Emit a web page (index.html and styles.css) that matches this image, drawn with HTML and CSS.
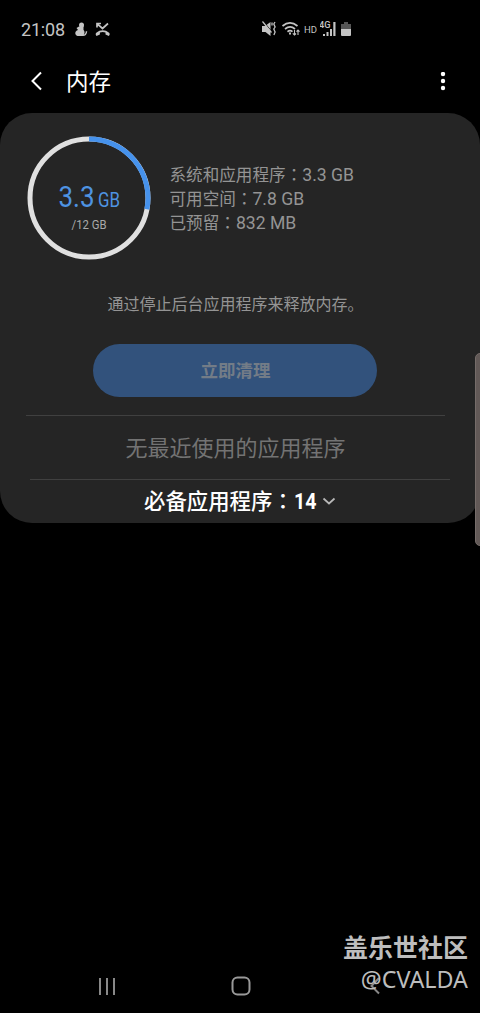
FILE: index.html
```html
<!DOCTYPE html>
<html lang="zh-CN">
<head>
<meta charset="utf-8">
<title>内存</title>
<link rel="stylesheet" href="styles.css">
</head>
<body>
<div class="screen">
  <header class="status">
    <span class="time">21:08</span>
    <svg class="status-left" width="38" height="18" viewBox="0 0 38 18" fill="#c4c4c4">
      <circle cx="7.500" cy="5" r="2.500"/><path d="M5 6.500 9.500 6v4c1.500 1 1.500 5-1 6H3.500C.5 15 .5 11 4 10L2.500 8z"/><path d="M8 15.300c3 .5 4.500-1.300 4.500-4" fill="none" stroke="#c4c4c4" stroke-width="1.400"/>
      <path d="M22.500 16c-1-1.400-1.100-2.400-.2-3.300 4-3.300 8.800-3.300 12.800 0 .9.900.8 1.900-.2 3.300l-3.400-1.600v-1.800c-1.900-.8-3.700-.8-5.600 0v1.800z"/>
      <path d="M23 7.500V3.500h4M23.300 3.800 28.500 8.500 34 3.500" fill="none" stroke="#c4c4c4" stroke-width="1.700"/>
    </svg>
    <svg class="status-sound" width="40" height="18" viewBox="0 0 40 18" fill="none" stroke="#c4c4c4" stroke-width="1.700">
      <path d="M1 6h3l5.500-4v14l-5-4H1z" fill="#c4c4c4" stroke="none"/><path d="m2.500 1.500 9 11" stroke="#000" stroke-width="1"/><path d="m1.500 1.500 9 11" stroke-width="1.200"/>
      <path d="M11 2.500v3M14 2l-1.200 2 1.300 3-1.300 2 1.300 3-1.200 3" stroke-width="1.300"/>
      <path d="M21.500 6c4.700-4 10.300-4 15 0M24 9c3.200-2.600 7-2.600 10 0M26.500 11.700c1.600-1.200 3.500-1.200 5 0"/>
      <path d="M29 12.500v2" stroke-width="2"/><path d="M33.500 10v5m-1.700-1.700 1.700 1.700 1.500-1.500M37 15V10m-1.500 1.600L37 10l1.500 1.600" stroke-width="1.100"/>
    </svg>
    <span class="hd">HD</span>
    <svg class="status-signal" width="33" height="18" viewBox="0 0 33 18" fill="#c4c4c4">
      <text x="-1" y="8" class="net" textLength="11.500" lengthAdjust="spacingAndGlyphs">4G</text>
      <path d="M3 14h2v2H3zM6.500 12h2v4h-2zM10 9h2v7h-2zM13.300 2h2.200v14h-2.200z"/>
      <path d="M24 2h4v2h3v5H21V4h3z" fill="#555"/><path d="M21 9h10v6q0 1-1 1h-8q-1 0-1-1z"/>
    </svg>
  </header>

  <nav class="toolbar">
    <svg class="back" width="14" height="22" viewBox="0 0 14 22"><path d="M11 1.500 2.500 10 11 18.500" fill="none" stroke="#fff" stroke-width="2"/></svg>
    <h1 class="title">内存</h1>
    <svg class="more" width="6" height="20" viewBox="0 0 6 20" fill="#fff"><circle cx="3" cy="2" r="2.200"/><circle cx="3" cy="9" r="2.200"/><circle cx="3" cy="16" r="2.200"/></svg>
  </nav>

  <main class="card">
    <section class="summary">
      <svg class="ring" width="124" height="124" viewBox="0 0 124 124">
        <circle cx="62" cy="62" r="59" fill="none" stroke="#e0e0e0" stroke-width="5"/>
        <path d="M62 3A59 59 0 0 1 119.900 73.300" fill="none" stroke="#4692ec" stroke-width="5"/>
        <text class="used" x="31.500" y="71" textLength="36" lengthAdjust="spacingAndGlyphs">3.3</text>
        <text class="unit" x="71" y="71" textLength="22" lengthAdjust="spacingAndGlyphs">GB</text>
        <text class="total" x="44.500" y="93" textLength="35" lengthAdjust="spacingAndGlyphs">/12 GB</text>
      </svg>
      <ul class="details">
        <li>系统和应用程序<span class="colon" lang="zh-TW">：</span><span class="value">3.3 GB</span></li>
        <li>可用空间<span class="colon" lang="zh-TW">：</span><span class="value">7.8 GB</span></li>
        <li>已预留<span class="colon" lang="zh-TW">：</span><span class="value">832 MB</span></li>
      </ul>
    </section>
    <p class="hint">通过停止后台应用程序来释放内存。</p>
    <button class="clean">立即清理</button>
    <div class="empty">无最近使用的应用程序</div>
    <div class="essential">
      <span>必备应用程序<span class="colon" lang="zh-TW">：</span></span><span class="count">14</span>
      <svg class="chevron" width="14" height="9" viewBox="0 0 14 9"><path d="m1.500 1.500 5.500 5 5.500-5" fill="none" stroke="#b8b8b8" stroke-width="1.700"/></svg>
    </div>
  </main>

  <div class="edge"></div>

  <footer class="navbar">
    <svg class="recents" width="18" height="18" viewBox="0 0 18 18" fill="#888"><path d="M1 1h2v17H1zM8 1h2v17H8zM15 1h2v17h-2z"/></svg>
    <svg class="home" width="20" height="20" viewBox="0 0 20 20"><rect x="1.500" y="1.500" width="17" height="17" rx="5" fill="none" stroke="#999" stroke-width="2"/></svg>
    <svg class="nav-back" width="12" height="18" viewBox="0 0 12 18"><path d="M9 1 1.500 9 9 16.500" fill="none" stroke="#888" stroke-width="2"/></svg>
  </footer>
  <div class="watermark">
    <div class="community">盖乐世社区</div>
    <div class="author">@CVALDA</div>
  </div>
</div>
</body>
</html>
```
FILE: styles.css
```css
* { box-sizing: border-box; }
body { margin: 0; background: #000; }
.screen {
  position: relative;
  display: flex;
  flex-direction: column;
  width: 480px;
  height: 1013px;
  overflow: hidden;
  background: #000;
  color: #fff;
  font-family: Roboto, "Noto Sans CJK SC", sans-serif;
}
svg { display: block; flex: none; }
.status { display: flex; align-items: center; height: 58px; padding-left: 21px; color: #c4c4c4; }
.time { width: 53px; font-size: 18px; letter-spacing: -0.200px; white-space: nowrap; }
.status-sound { margin-left: 149px; }
.hd { width: 15px; margin-left: 3px; font-size: 9.500px; }
.status-signal { margin-left: 1px; }
.net { font: 500 9px Roboto, sans-serif; }

.toolbar { display: flex; align-items: center; height: 55px; padding: 0 34px 8px 30px; }
.title { flex: 1; margin: 0 0 0 22px; font-size: 22.500px; line-height: 32px; font-weight: 400; }

.card { height: 410px; border-radius: 32px; background: #252525; padding: 23px 0 0; }
.summary { display: flex; padding-left: 27px; height: 124px; }
.used, .unit, .total { font-family: Roboto, sans-serif; }
.used { font-size: 30px; fill: #4e93e2; }
.unit { font-size: 20px; fill: #4e93e2; }
.total { font-size: 13px; fill: #aaa; }
.details { list-style: none; margin: 28px 0 0 18.500px; padding: 0; color: #949494; font-size: 16.600px; line-height: 24px; white-space: nowrap; }
.details li { height: 24px; }
.value { font-size: 17.600px; line-height: 1; }
.colon { font-family: "Noto Sans CJK TC", sans-serif; line-height: 1; }
.hint { margin: 33px 9px 0 0; text-align: center; font-size: 16px; line-height: 24px; color: #949494; }
.clean {
  display: block;
  width: 284px;
  height: 53px;
  margin: 27px 0 0 93px;
  padding: 2px 0 0 1px;
  border: 0;
  border-radius: 27px;
  background: #32527c;
  color: #737c87;
  font: 700 17.500px/51px Roboto, "Noto Sans CJK SC", sans-serif;
}
.empty {
  width: 419px;
  height: 65px;
  margin: 18px 0 0 26px;
  border-top: 1px solid #404040;
  font-size: 22px;
  line-height: 66px;
  text-align: center;
  color: #737373;
}
.essential {
  display: flex;
  align-items: center;
  width: 420px;
  height: 43px;
  margin: -1px 0 0 30px;
  padding: 1px 0 0 114px;
  border-top: 1px solid #404040;
  font-size: 21.400px;
  line-height: 43px;
  font-weight: 500;
  white-space: nowrap;
}
.count { width: 24px; font-weight: 700; font-size: 22px; transform: scaleX(0.890); transform-origin: left; }
.chevron { margin-left: 4px; }

.edge {
  position: absolute;
  left: 475px;
  top: 353px;
  width: 10px;
  height: 193px;
  border-radius: 5px;
  border: 1px solid #756c69;
  background: #625957;
}

.navbar { display: flex; align-items: center; height: 54px; margin-top: auto; padding-left: 98px; }
.home { margin-left: 115px; }
.nav-back { margin-left: 119px; }
.watermark { position: absolute; right: 12px; bottom: 19px; text-align: right; color: #bdbdbd; white-space: nowrap; }
.community { font: 700 25px/34px "Noto Sans CJK SC", sans-serif; margin-bottom: 1px; }
.author { font: 400 23.300px/30px "Noto Sans", sans-serif; }
```
